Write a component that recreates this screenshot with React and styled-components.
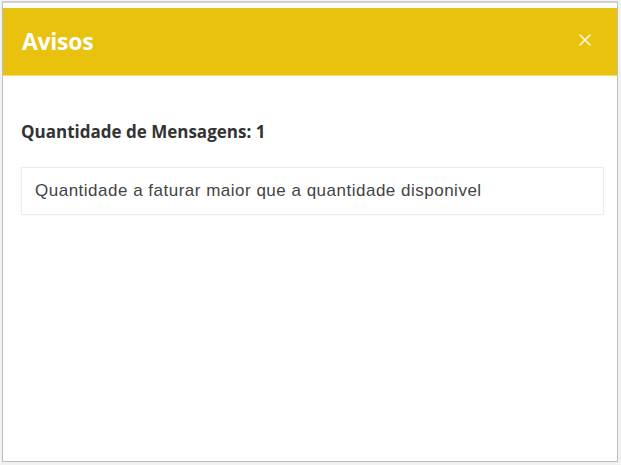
import React from "react";
import styled, { createGlobalStyle } from "styled-components";

const Global = createGlobalStyle`
  html, body { margin: 0; padding: 0; background: #fff; }
  body { font-family: "Open Sans", "Noto Sans", sans-serif; }
  #root { width: 621px; height: 465px; }
`;

const Frame = styled.div`
  box-sizing: border-box;
  width: 621px;
  height: 465px;
  padding: 1px 3px 3px 2px;
  background: #f2f2f2;
  display: flex;
`;

const Dialog = styled.div`
  box-sizing: border-box;
  flex: 1;
  display: flex;
  flex-direction: column;
  border: 1px solid #bdbdbd;
  border-top: 2px solid #d0d0d0;
  background: #fff;
  padding-top: 5px;
`;

const Header = styled.div`
  height: 67px;
  background: #e8c20c;
  display: flex;
  align-items: center;
  justify-content: space-between;
  padding: 0 24px 0 19px;
  border-bottom: 1px solid #f3dc72;
`;

const Title = styled.h1`
  margin: 0;
  font-family: "Open Sans", sans-serif;
  font-size: 23px;
  font-weight: 700;
  color: #fff;
  letter-spacing: -0.3px;
  line-height: 1;
`;

const Close = styled.button`
  border: 0;
  background: none;
  padding: 0;
  width: 16px;
  height: 16px;
  display: flex;
  align-items: center;
  justify-content: center;
  cursor: pointer;
  margin-bottom: 4px;
`;

const Body = styled.div`
  padding: 44px 13px 0 18px;
  display: flex;
  flex-direction: column;
  gap: 23px;
`;

const Count = styled.div`
  font-family: "Open Sans", sans-serif;
  font-size: 17px;
  line-height: 24px;
  font-weight: 700;
  color: #333;
`;

const Message = styled.div`
  border: 1px solid #ececec;
  box-shadow: 0 0 2px rgba(0,0,0,0.04);
  padding: 0 13px;
  height: 46px;
  display: flex;
  align-items: center;
  font-family: "Liberation Sans", Arial, sans-serif;
  font-size: 17px;
  letter-spacing: 0.5px;
  color: #444;
`;

export default function App() {
  return (
    <>
      <Global />
      <Frame>
        <Dialog>
          <Header>
            <Title>Avisos</Title>
            <Close aria-label="Fechar">
              <svg width="14" height="14" viewBox="0 0 14 14">
                <path d="M2 2 L12 12 M12 2 L2 12" stroke="#fff" strokeWidth="1.6" strokeLinecap="round" opacity="0.9" />
              </svg>
            </Close>
          </Header>
          <Body>
            <Count>Quantidade de Mensagens: 1</Count>
            <Message>Quantidade a faturar maior que a quantidade disponivel</Message>
          </Body>
        </Dialog>
      </Frame>
    </>
  );
}
